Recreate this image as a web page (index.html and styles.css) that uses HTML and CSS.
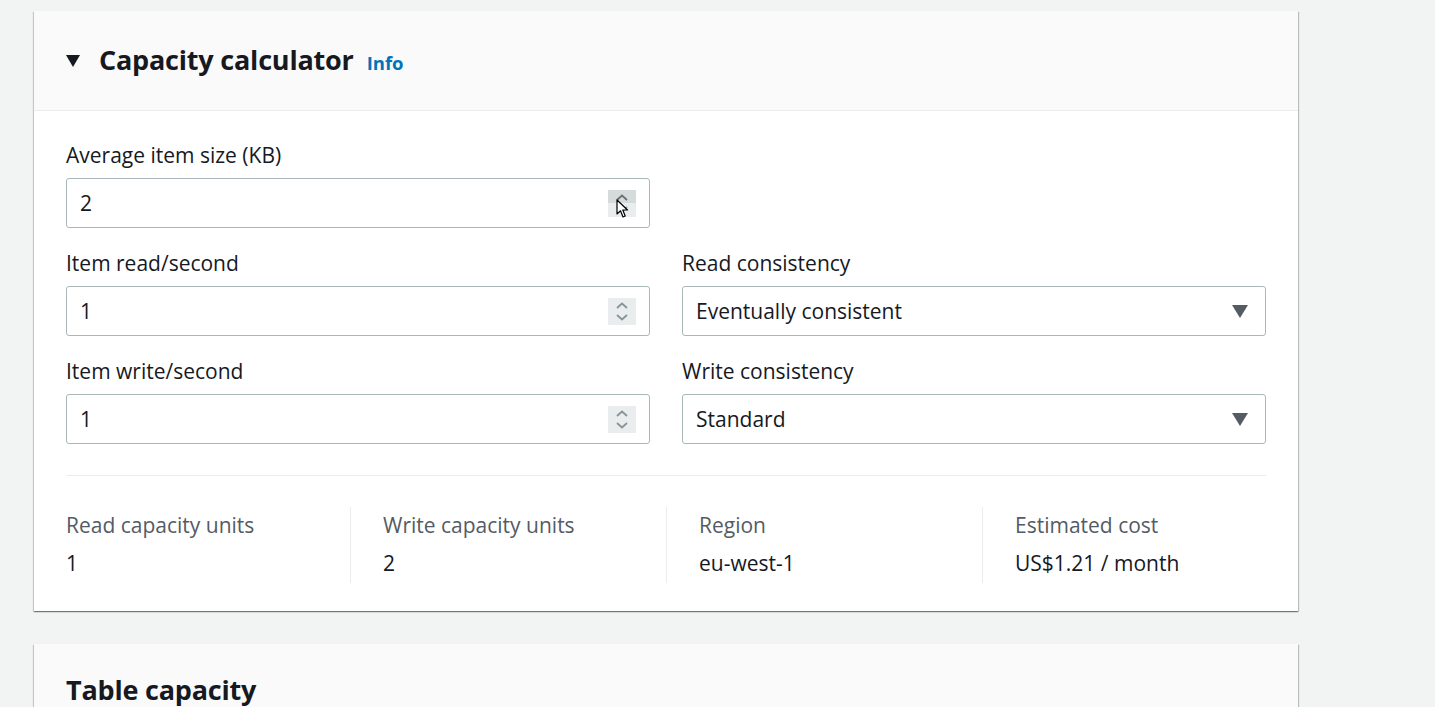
FILE: index.html
```html
<!DOCTYPE html>
<html>
<head>
<meta charset="utf-8">
<link rel="stylesheet" href="styles.css">
</head>
<body>
<div class="page">
  <section class="card">
    <header class="card-head">
      <span class="caret"></span>
      <h2 class="title">Capacity calculator</h2>
      <a class="info">Info</a>
    </header>
    <div class="card-body">
      <div class="form-grid">
        <div class="field">
          <label class="label">Average item size (KB)</label>
          <div class="input">
            <span class="value">2</span>
            <span class="spin hover">
              <svg width="28" height="27" viewBox="0 0 28 27"><path d="M9 10 L14 5.5 L19 10" fill="none" stroke="#687078" stroke-width="1.8"/><path d="M9 17 L14 21.5 L19 17" fill="none" stroke="#879596" stroke-width="1.8"/></svg>
              <svg class="cursor" width="14" height="20" viewBox="0 0 14 20"><path d="M1 1 L1 15 L4.5 11.8 L7 18 L9.2 17 L6.8 11 L11.5 11 Z" fill="#fff" stroke="#000" stroke-width="1.2" stroke-linejoin="round"/></svg>
            </span>
          </div>
        </div>
        <div class="field empty"></div>
        <div class="field">
          <label class="label">Item read/second</label>
          <div class="input">
            <span class="value">1</span>
            <span class="spin">
              <svg width="28" height="27" viewBox="0 0 28 27"><path d="M9 10 L14 5.5 L19 10" fill="none" stroke="#879596" stroke-width="1.8"/><path d="M9 17 L14 21.5 L19 17" fill="none" stroke="#879596" stroke-width="1.8"/></svg>
            </span>
          </div>
        </div>
        <div class="field">
          <label class="label">Read consistency</label>
          <div class="input select">
            <span class="value">Eventually consistent</span>
            <svg class="tri" width="16" height="13" viewBox="0 0 16 13"><path d="M0 0 H16 L8 13 Z" fill="#545b64"/></svg>
          </div>
        </div>
        <div class="field">
          <label class="label">Item write/second</label>
          <div class="input">
            <span class="value">1</span>
            <span class="spin">
              <svg width="28" height="27" viewBox="0 0 28 27"><path d="M9 10 L14 5.5 L19 10" fill="none" stroke="#879596" stroke-width="1.8"/><path d="M9 17 L14 21.5 L19 17" fill="none" stroke="#879596" stroke-width="1.8"/></svg>
            </span>
          </div>
        </div>
        <div class="field">
          <label class="label">Write consistency</label>
          <div class="input select">
            <span class="value">Standard</span>
            <svg class="tri" width="16" height="13" viewBox="0 0 16 13"><path d="M0 0 H16 L8 13 Z" fill="#545b64"/></svg>
          </div>
        </div>
      </div>
      <div class="divider"></div>
      <div class="stats">
        <div class="stat"><div class="stat-label">Read capacity units</div><div class="stat-value">1</div></div>
        <div class="stat"><div class="stat-label">Write capacity units</div><div class="stat-value">2</div></div>
        <div class="stat"><div class="stat-label">Region</div><div class="stat-value">eu-west-1</div></div>
        <div class="stat"><div class="stat-label">Estimated cost</div><div class="stat-value">US$1.21 / month</div></div>
      </div>
    </div>
  </section>
  <section class="card card2">
    <header class="card-head plain">
      <h2 class="title">Table capacity</h2>
    </header>
  </section>
</div>
</body>
</html>
```
FILE: styles.css
```css
html, body {
  margin: 0;
  padding: 0;
  background: #f2f3f3;
  font-family: "Open Sans", "Noto Sans", sans-serif;
  color: #16191f;
  overflow: hidden;
  height: 707px;
}
.page {
  padding: 11px 0 0 34px;
  width: 1264px;
}
.card {
  background: #fff;
  box-shadow: 0 1px 1px 0 rgba(0,28,36,.35), 1px 1px 1px 0 rgba(0,28,36,.2), -1px 1px 1px 0 rgba(0,28,36,.15);
}
.card2 {
  margin-top: 33px;
  height: 200px;
}
.card-head {
  background: #fafafa;
  height: 100px;
  border-bottom: 1px solid #eaeded;
  display: flex;
  align-items: center;
  padding-left: 32px;
  box-sizing: border-box;
}
.card-head.plain {
  align-items: flex-start;
  padding-top: 30px;
  border-bottom: none;
}
.caret {
  width: 0;
  height: 0;
  border-left: 7.5px solid transparent;
  border-right: 7.5px solid transparent;
  border-top: 12px solid #16191f;
  margin-right: 19px;
  margin-top: 1px;
}
.title {
  margin: 0;
  font-size: 27px;
  font-weight: 700;
  letter-spacing: -0.2px;
  line-height: 36px;
  margin-top: -2px;
}
.info {
  color: #0073bb;
  font-weight: 700;
  font-size: 18.5px;
  margin-left: 13px;
  margin-top: 3px;
}
.card-body {
  padding: 30px 32px 0 32px;
  height: 500px;
  box-sizing: border-box;
}
.form-grid {
  display: grid;
  grid-template-columns: 584px 584px;
  column-gap: 32px;
  row-gap: 21px;
}
.field {
  display: flex;
  flex-direction: column;
}
.label {
  font-size: 21px;
  line-height: 28px;
  margin-bottom: 9px;
}
.input {
  height: 50px;
  box-sizing: border-box;
  border: 1px solid #aab7b8;
  border-radius: 3px;
  display: flex;
  align-items: center;
  padding: 0 13px;
  position: relative;
}
.value {
  font-size: 21px;
  flex: 1;
}
.spin {
  width: 28px;
  height: 27px;
  background: #eaeded;
  display: block;
  position: relative;
}
.spin svg { display: block; }
.spin.hover {
  background: linear-gradient(#d5dbdb 0 50%, #eaeded 50% 100%);
}
.cursor {
  position: absolute;
  left: 8px;
  top: 9px;
}
.tri {
  margin-right: 4px;
  margin-top: 1px;
}
.divider {
  border-top: 1px solid #eaeded;
  margin-top: 31px;
}
.stats {
  display: grid;
  grid-template-columns: repeat(4, 316px);
  margin: 31px -32px 0 -32px;
}
.stat {
  padding-left: 32px;
  border-left: 1px solid #eaeded;
  height: 76px;
  padding-top: 4px;
  box-sizing: border-box;
}
.stat:first-child { border-left: none; }
.stat-label {
  color: #545b64;
  font-size: 21px;
  line-height: 28px;
  margin-bottom: 10px;
}
.stat-value {
  font-size: 21px;
  line-height: 28px;
}
```
